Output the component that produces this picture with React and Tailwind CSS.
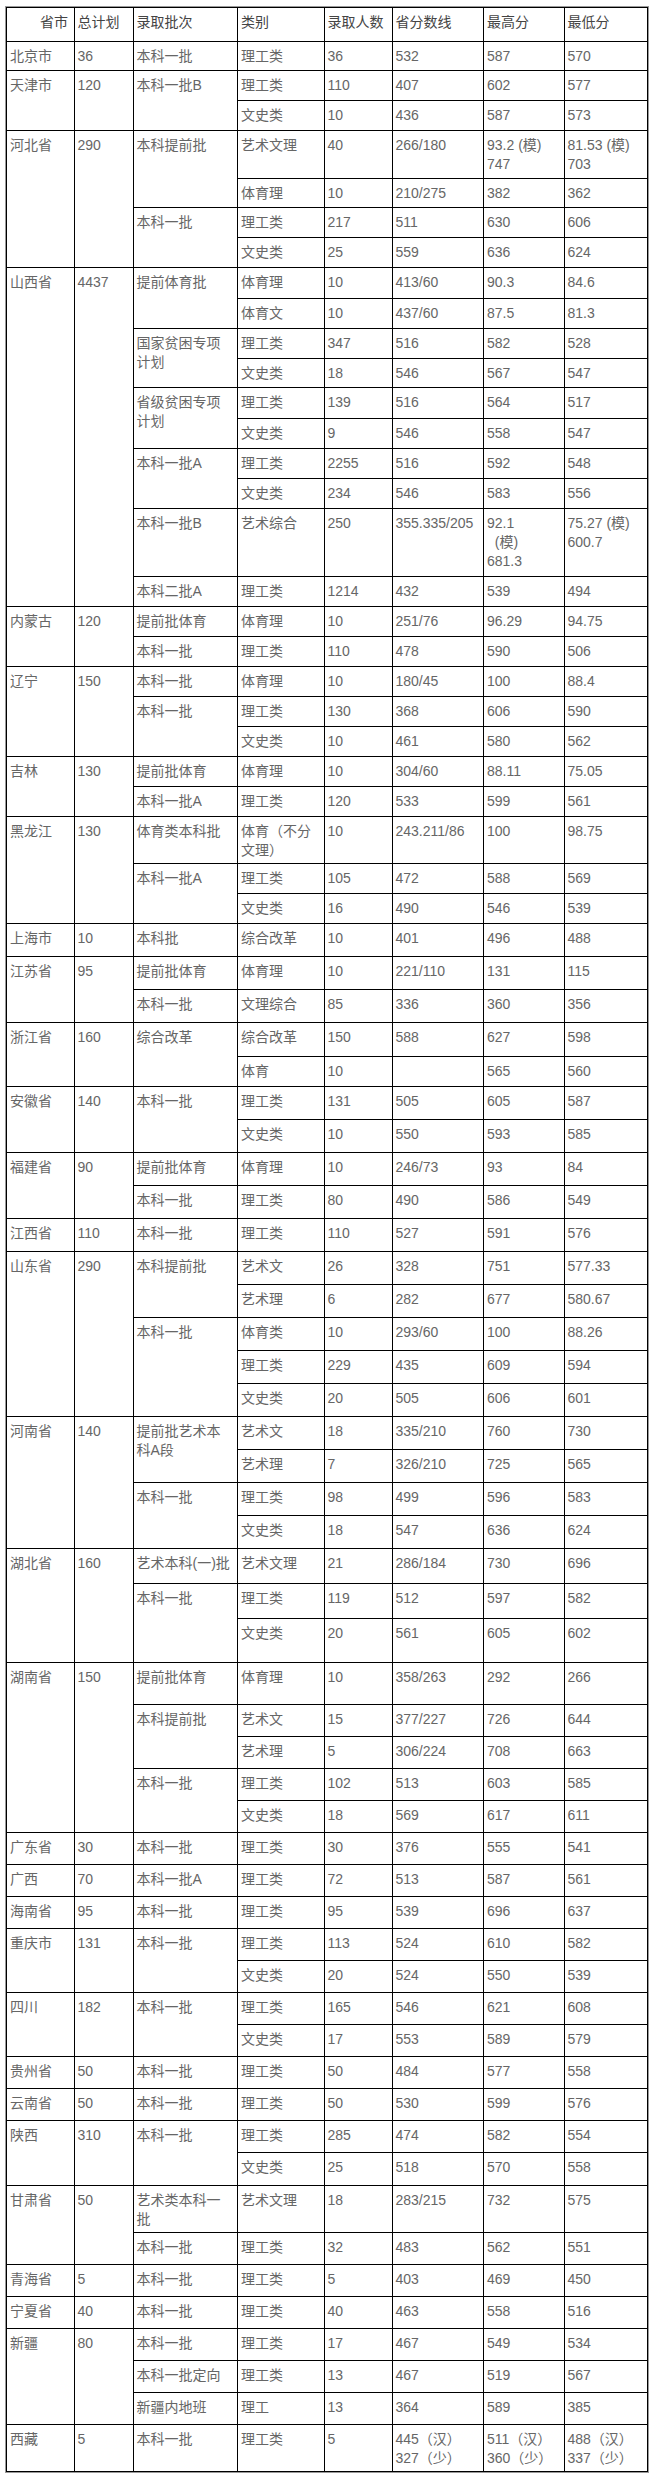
import React from 'react';

const heads = ['省市', '总计划', '录取批次', '类别', '录取人数', '省分数线', '最高分', '最低分'];
const widths = ['w-[67.5px]', 'w-[59px]', 'w-[104.5px]', 'w-[86.5px]', 'w-[68px]', 'w-[91.5px]', 'w-[80.5px]', 'w-[83px]'];

// province -> batches -> rows (类别, 录取人数, 省分数线, 最高分, 最低分)
const data = [
  { p: '北京市', t: '36', b: [['本科一批', [['理工类', '36', '532', '587', '570']]]] },
  { p: '天津市', t: '120', b: [['本科一批B', [['理工类', '110', '407', '602', '577'], ['文史类', '10', '436', '587', '573']]]] },
  {
    p: '河北省', t: '290', b: [
      ['本科提前批', [['艺术文理', '40', '266/180', '93.2 (模)\n747', '81.53 (模)\n703'], ['体育理', '10', '210/275', '382', '362']]],
      ['本科一批', [['理工类', '217', '511', '630', '606'], ['文史类', '25', '559', '636', '624']]],
    ],
  },
  {
    p: '山西省', t: '4437', b: [
      ['提前体育批', [['体育理', '10', '413/60', '90.3', '84.6'], ['体育文', '10', '437/60', '87.5', '81.3']]],
      ['国家贫困专项\n计划', [['理工类', '347', '516', '582', '528'], ['文史类', '18', '546', '567', '547']]],
      ['省级贫困专项\n计划', [['理工类', '139', '516', '564', '517'], ['文史类', '9', '546', '558', '547']]],
      ['本科一批A', [['理工类', '2255', '516', '592', '548'], ['文史类', '234', '546', '583', '556']]],
      ['本科一批B', [['艺术综合', '250', '355.335/205', '92.1\n\u00a0\u00a0(模)\n681.3', '75.27 (模)\n600.7']]],
      ['本科二批A', [['理工类', '1214', '432', '539', '494']]],
    ],
  },
  { p: '内蒙古', t: '120', b: [['提前批体育', [['体育理', '10', '251/76', '96.29', '94.75']]], ['本科一批', [['理工类', '110', '478', '590', '506']]]] },
  { p: '辽宁', t: '150', b: [['本科一批', [['体育理', '10', '180/45', '100', '88.4']]], ['本科一批', [['理工类', '130', '368', '606', '590'], ['文史类', '10', '461', '580', '562']]]] },
  { p: '吉林', t: '130', b: [['提前批体育', [['体育理', '10', '304/60', '88.11', '75.05']]], ['本科一批A', [['理工类', '120', '533', '599', '561']]]] },
  {
    p: '黑龙江', t: '130', b: [
      ['体育类本科批', [['体育（不分\n文理）', '10', '243.211/86', '100', '98.75']]],
      ['本科一批A', [['理工类', '105', '472', '588', '569'], ['文史类', '16', '490', '546', '539']]],
    ],
  },
  { p: '上海市', t: '10', b: [['本科批', [['综合改革', '10', '401', '496', '488']]]] },
  { p: '江苏省', t: '95', b: [['提前批体育', [['体育理', '10', '221/110', '131', '115']]], ['本科一批', [['文理综合', '85', '336', '360', '356']]]] },
  { p: '浙江省', t: '160', b: [['综合改革', [['综合改革', '150', '588', '627', '598'], ['体育', '10', '', '565', '560']]]] },
  { p: '安徽省', t: '140', b: [['本科一批', [['理工类', '131', '505', '605', '587'], ['文史类', '10', '550', '593', '585']]]] },
  { p: '福建省', t: '90', b: [['提前批体育', [['体育理', '10', '246/73', '93', '84']]], ['本科一批', [['理工类', '80', '490', '586', '549']]]] },
  { p: '江西省', t: '110', b: [['本科一批', [['理工类', '110', '527', '591', '576']]]] },
  {
    p: '山东省', t: '290', b: [
      ['本科提前批', [['艺术文', '26', '328', '751', '577.33'], ['艺术理', '6', '282', '677', '580.67']]],
      ['本科一批', [['体育类', '10', '293/60', '100', '88.26'], ['理工类', '229', '435', '609', '594'], ['文史类', '20', '505', '606', '601']]],
    ],
  },
  {
    p: '河南省', t: '140', b: [
      ['提前批艺术本\n科A段', [['艺术文', '18', '335/210', '760', '730'], ['艺术理', '7', '326/210', '725', '565']]],
      ['本科一批', [['理工类', '98', '499', '596', '583'], ['文史类', '18', '547', '636', '624']]],
    ],
  },
  {
    p: '湖北省', t: '160', b: [
      ['艺术本科(一)批', [['艺术文理', '21', '286/184', '730', '696']]],
      ['本科一批', [['理工类', '119', '512', '597', '582'], ['文史类', '20', '561', '605', '602']]],
    ],
  },
  {
    p: '湖南省', t: '150', b: [
      ['提前批体育', [['体育理', '10', '358/263', '292', '266']]],
      ['本科提前批', [['艺术文', '15', '377/227', '726', '644'], ['艺术理', '5', '306/224', '708', '663']]],
      ['本科一批', [['理工类', '102', '513', '603', '585'], ['文史类', '18', '569', '617', '611']]],
    ],
  },
  { p: '广东省', t: '30', b: [['本科一批', [['理工类', '30', '376', '555', '541']]]] },
  { p: '广西', t: '70', b: [['本科一批A', [['理工类', '72', '513', '587', '561']]]] },
  { p: '海南省', t: '95', b: [['本科一批', [['理工类', '95', '539', '696', '637']]]] },
  { p: '重庆市', t: '131', b: [['本科一批', [['理工类', '113', '524', '610', '582'], ['文史类', '20', '524', '550', '539']]]] },
  { p: '四川', t: '182', b: [['本科一批', [['理工类', '165', '546', '621', '608'], ['文史类', '17', '553', '589', '579']]]] },
  { p: '贵州省', t: '50', b: [['本科一批', [['理工类', '50', '484', '577', '558']]]] },
  { p: '云南省', t: '50', b: [['本科一批', [['理工类', '50', '530', '599', '576']]]] },
  { p: '陕西', t: '310', b: [['本科一批', [['理工类', '285', '474', '582', '554'], ['文史类', '25', '518', '570', '558']]]] },
  { p: '甘肃省', t: '50', b: [['艺术类本科一\n批', [['艺术文理', '18', '283/215', '732', '575']]], ['本科一批', [['理工类', '32', '483', '562', '551']]]] },
  { p: '青海省', t: '5', b: [['本科一批', [['理工类', '5', '403', '469', '450']]]] },
  { p: '宁夏省', t: '40', b: [['本科一批', [['理工类', '40', '463', '558', '516']]]] },
  {
    p: '新疆', t: '80', b: [
      ['本科一批', [['理工类', '17', '467', '549', '534']]],
      ['本科一批定向', [['理工类', '13', '467', '519', '567']]],
      ['新疆内地班', [['理工', '13', '364', '589', '385']]],
    ],
  },
  { p: '西藏', t: '5', b: [['本科一批', [['理工类', '5', '445（汉）\n327（少）', '511（汉）\n360（少）', '488（汉）\n337（少）']]]] },
];

// measured row pitches from the screenshot
const heights = [
  29, 30, 30, 48, 29, 30, 30, 31, 30, 30, 29, 31, 30, 30, 30, 68, 30, 30, 30, 30, 30, 30, 30, 30, 47, 30, 30,
  33, 33, 33, 34, 30, 33, 33, 33, 33, 33, 33, 33, 33, 33, 33, 33, 33, 33, 33, 35, 35, 44, 42,
  32, 32, 32, 32, 32, 32, 32, 32, 32, 32, 32, 32, 32, 32, 33, 47, 32, 32, 32, 32, 32, 32, 47,
];

const cell = 'border border-black align-top pt-[5px] pl-[3px] pr-[3px] pb-0 whitespace-pre text-left font-normal';

export default function App() {
  const rows = [];
  let idx = 0;
  data.forEach((prov, pi) => {
    const provSpan = prov.b.reduce((n, b) => n + b[1].length, 0);
    prov.b.forEach((batch, bi) => {
      batch[1].forEach((r, ri) => {
        const h = heights[idx];
        rows.push(
          <tr key={idx} style={{ height: h }}>
            {bi === 0 && ri === 0 && (
              <>
                <td rowSpan={provSpan} className={cell}>{prov.p}</td>
                <td rowSpan={provSpan} className={cell}>{prov.t}</td>
              </>
            )}
            {ri === 0 && <td rowSpan={batch[1].length} className={cell}>{batch[0]}</td>}
            {r.map((v, ci) => (
              <td key={ci} className={cell}>{v}</td>
            ))}
          </tr>
        );
        idx++;
      });
    });
  });

  return (
    <div
      className="min-h-[2478px] bg-white pt-[7px] pl-[6px] text-[14px] leading-[19px] text-[#666]"
      style={{ fontFamily: '"Liberation Sans", Arial, "Noto Sans CJK SC", sans-serif' }}
    >
      <table className="table-fixed border-collapse w-[641px] outline outline-1 outline-[#999]">
        <colgroup>
          {widths.map((w, i) => (
            <col key={i} className={w} />
          ))}
        </colgroup>
        <thead>
          <tr className="h-[34px] text-[#444]">
            {heads.map((h, i) => (
              <th key={i} className={cell + (i === 0 ? ' !pl-[33px]' : '')}>
                {h}
              </th>
            ))}
          </tr>
        </thead>
        <tbody>{rows}</tbody>
      </table>
    </div>
  );
}
